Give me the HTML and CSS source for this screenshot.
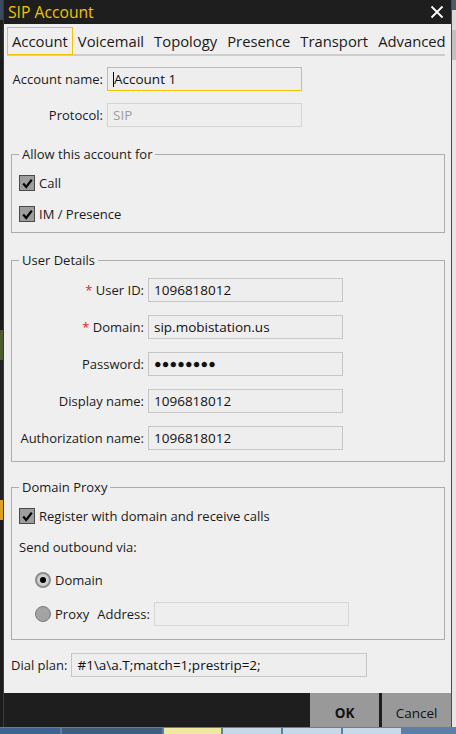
FILE: index.html
```html
<!DOCTYPE html>
<html>
<head>
<meta charset="utf-8">
<link rel="stylesheet" href="styles.css">
</head>
<body>
<div class="screen">
  <div class="desk-left"></div>
  <div class="dialog">
    <div class="titlebar">
      <span class="title">SIP Account</span>
      <svg class="close" width="14" height="14" viewBox="0 0 14 14"><path d="M1.5 1.5 L12.5 12.5 M12.5 1.5 L1.5 12.5" stroke="#ffffff" stroke-width="1.8" fill="none"/></svg>
    </div>
    <div class="tabs">
      <span class="tab active">Account</span>
      <span class="tab">Voicemail</span>
      <span class="tab">Topology</span>
      <span class="tab">Presence</span>
      <span class="tab">Transport</span>
      <span class="tab">Advanced</span>
    </div>
    <div class="content">
      <div class="top-grid">
        <label class="lbl">Account name:</label>
        <div class="input focus"><span class="caret"></span>Account 1</div>
        <label class="lbl">Protocol:</label>
        <div class="input disabled">SIP</div>
      </div>

      <fieldset class="group allow">
        <legend>Allow this account for</legend>
        <div class="check-row"><span class="checkbox"><svg width="13" height="13" viewBox="0 0 13 13"><path d="M2.2 6.6 L5.2 10 L10.8 2.6" stroke="#000" stroke-width="2.2" fill="none"/></svg></span>Call</div>
        <div class="check-row"><span class="checkbox"><svg width="13" height="13" viewBox="0 0 13 13"><path d="M2.2 6.6 L5.2 10 L10.8 2.6" stroke="#000" stroke-width="2.2" fill="none"/></svg></span>IM / Presence</div>
      </fieldset>

      <fieldset class="group details">
        <legend>User Details</legend>
        <div class="details-grid">
          <label class="lbl"><span class="req">*</span> User ID:</label>
          <div class="input">1096818012</div>
          <label class="lbl"><span class="req">*</span> Domain:</label>
          <div class="input">sip.mobistation.us</div>
          <label class="lbl">Password:</label>
          <div class="input dots">●●●●●●●●</div>
          <label class="lbl">Display name:</label>
          <div class="input">1096818012</div>
          <label class="lbl">Authorization name:</label>
          <div class="input">1096818012</div>
        </div>
      </fieldset>

      <fieldset class="group proxy">
        <legend>Domain Proxy</legend>
        <div class="check-row"><span class="checkbox"><svg width="13" height="13" viewBox="0 0 13 13"><path d="M2.2 6.6 L5.2 10 L10.8 2.6" stroke="#000" stroke-width="2.2" fill="none"/></svg></span>Register with domain and receive calls</div>
        <div class="plain-row">Send outbound via:</div>
        <div class="radio-row first"><span class="radio on"></span>Domain</div>
        <div class="radio-row"><span class="radio"></span>Proxy<span class="addr-lbl">Address:</span><div class="input addr"></div></div>
      </fieldset>

      <div class="dial-row">
        <label class="lbl-left">Dial plan:</label>
        <div class="input dial">#1\a\a.T;match=1;prestrip=2;</div>
      </div>
    </div>
    <div class="footer">
      <button class="btn ok">OK</button>
      <button class="btn">Cancel</button>
    </div>
  </div>
  <div class="desk-right"></div>
</div>
<div class="taskbar">
  <span class="task t1"></span>
  <span class="task t2"></span>
  <span class="task t3"></span>
  <span class="task t4"></span>
  <span class="task t5"></span>
  <span class="task t6"></span>
</div>
</body>
</html>
```
FILE: styles.css
```css
* { box-sizing: border-box; }
html, body { margin: 0; padding: 0; }
body {
  width: 456px;
  height: 734px;
  overflow: hidden;
  background: #2a2a2a;
  font-family: "Open Sans", "Noto Sans", sans-serif;
  font-size: 13px;
  color: #1a1a1a;
}
.screen {
  display: flex;
  height: 727px;
}
.desk-left {
  width: 3px;
  background: linear-gradient(#3b4a5c 0 20px, #202020 20px 60px, #1a1a1a 60px 330px, #4d5c2e 330px 360px, #222 360px 500px, #e0a020 500px 520px, #1c1c1c 520px);
}
.desk-right {
  width: 4px;
  background: linear-gradient(#4a5a6e 0 10px, #d8d8d8 10px 30px, #c0c0c0 30px 60px, #e6e6e6 60px);
}
.dialog {
  width: 449px;
  display: flex;
  flex-direction: column;
  background: #efefef;
  border-left: 1px solid #3a3a3a;
  border-right: 1px solid #4a4a4a;
}
.titlebar {
  height: 24px;
  background: #1e1e1e;
  display: flex;
  align-items: center;
  justify-content: space-between;
  padding: 0 7px 0 4px;
}
.title {
  color: #f3c300;
  font-size: 15.7px;
  line-height: 24px;
}
.close { display: block; }
.tabs {
  height: 32px;
  display: flex;
  align-items: flex-end;
  margin: 0 6px 0 3px;
  border-bottom: 2px solid #cdcdcd;
}
.tab {
  font-size: 14.8px;
  line-height: 26px;
  height: 28px;
  padding: 0 4px;
  border: 1px solid transparent;
  margin-bottom: -1px;
  white-space: nowrap;
  color: #1a1a1a;
}
.tab.active {
  border-color: #f3c300;
  position: relative;
  z-index: 1;
}
.content {
  flex: 1;
  padding: 11px 6px 0 7px;
}
.top-grid {
  display: grid;
  grid-template-columns: 92px 195px;
  column-gap: 4px;
  row-gap: 12px;
  align-items: center;
}
.lbl { text-align: right; white-space: nowrap; }
.input {
  height: 24px;
  border: 1px solid #c6c6c6;
  background: #eeeeee;
  padding: 0 5px;
  line-height: 22px;
  font-size: 13.5px;
  color: #111;
  white-space: nowrap;
  overflow: hidden;
}
.input.focus { border-color: #f3c300; }
.caret {
  display: inline-block;
  width: 1px;
  height: 15px;
  background: #000;
  vertical-align: -3px;
}
.input.disabled { color: #9c9c9c; border-color: #d4d4d4; }
.group {
  margin: 0;
  border: 1px solid #acacac;
  padding: 0 7px;
  min-width: 0;
}
.group legend {
  padding: 0 3px;
  line-height: 18px;
  margin-left: 0;
}
.allow { margin-top: 18px; padding-top: 10px; padding-bottom: 8px; }
.check-row {
  height: 20px;
  display: flex;
  align-items: center;
  gap: 4px;
}
.allow .check-row + .check-row { margin-top: 11px; }
.checkbox {
  width: 16px;
  height: 16px;
  background: #9d9d9d;
  border: 1px solid #4a4a4a;
  display: flex;
  align-items: center;
  justify-content: center;
}
.checkbox svg { display: block; }
.details { margin-top: 18px; padding-top: 9px; padding-bottom: 11px; }
.details-grid {
  display: grid;
  grid-template-columns: 125px 195px;
  column-gap: 4px;
  row-gap: 13px;
  align-items: center;
}
.req { color: #e3202a; }
.input.dots { font-size: 12.5px; letter-spacing: 0.2px; }
.proxy { margin-top: 16px; padding-top: 10px; padding-bottom: 13px; }
.plain-row { height: 20px; line-height: 20px; margin-top: 11px; }
.radio-row {
  display: flex;
  align-items: center;
  height: 24px;
  padding-left: 16px;
  margin-top: 12px;
}
.radio-row.first { margin-top: 13px; height: 20px; }
.radio {
  width: 16px;
  height: 16px;
  border-radius: 50%;
  background: #a3a3a3;
  border: 1px solid #7a7a7a;
  margin-right: 4px;
  display: flex;
  align-items: center;
  justify-content: center;
}
.radio.on { background: #cfcfcf; border: 2px solid #8d8d8d; }
.radio.on::after {
  content: "";
  width: 6px;
  height: 6px;
  border-radius: 50%;
  background: #000;
}
.addr-lbl { margin-left: 8px; margin-right: 4px; }
.input.addr { width: 195px; border-color: #d6d6d6; }
.dial-row {
  display: flex;
  align-items: center;
  gap: 4px;
  margin-top: 13px;
}
.input.dial { width: 296px; }
.footer {
  height: 34px;
  background: #1e1e1e;
  display: flex;
  justify-content: flex-end;
  gap: 3px;
}
.btn {
  width: 69px;
  height: 34px;
  border: 0;
  background: #999999;
  font-family: "Open Sans", "Noto Sans", sans-serif;
  font-size: 13.5px;
  color: #111;
  padding: 5px 0 0;
}
.btn.ok { font-weight: bold; }
.taskbar {
  height: 7px;
  display: flex;
  background: #5b7fa6;
  gap: 2px;
}
.task { display: block; height: 7px; margin-top: 1px; }
.t1 { width: 60px; background: #3c6491; }
.t2 { width: 100px; background: #3d5e80; }
.t3 { width: 57px; background: #efe8a0; }
.t4 { width: 58px; background: #c9d8e6; }
.t5 { width: 58px; background: #c9d8e6; }
.t6 { width: 58px; background: #cad9e7; }
```
